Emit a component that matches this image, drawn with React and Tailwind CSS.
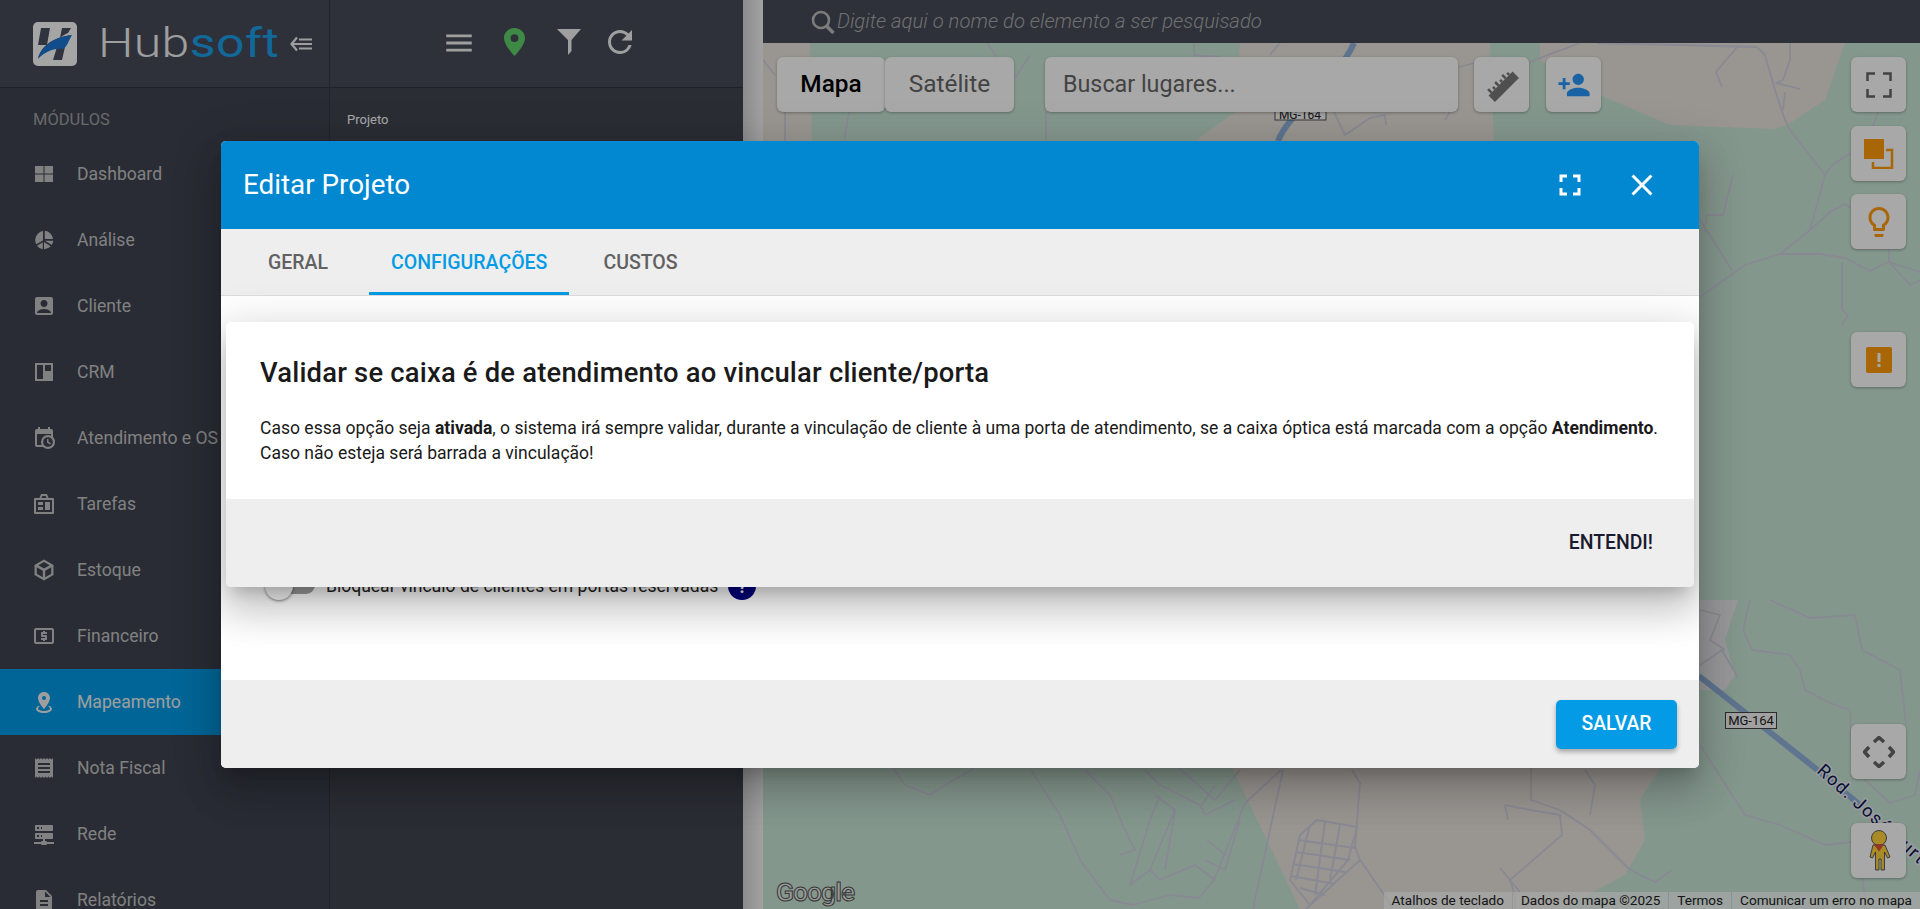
import React from "react";
import {
  MdAccountBox, MdOutlineLocalAtm, MdReceipt, MdDescription, MdClose, MdFullscreen, MdPersonAdd,
  MdLightbulbOutline, MdMenu, MdRefresh,
} from "react-icons/md";

const P = ({ d, className }) => (
  <svg viewBox="0 0 24 24" className={className} fill="currentColor"><path d={d} /></svg>
);
const Grid = ({ className }) => <P className={className} d="M3 4h8.500v7.500H3zM12.500 4H21v7.500h-8.500zM3 12.500h8.500V20H3zM12.500 12.500H21V20h-8.500z" />;
const Pie = ({ className }) => <P className={className} d="M11 3v9.500l-6.800 3.800A9.300 9.300 0 0 1 11 3zM12.800 2.800A9 9 0 0 1 21 11h-8.200zM13 12.800h8.300c-.2 1.500-.7 2.900-1.500 4.100zM12 14l6.700 4.300A9.300 9.300 0 0 1 12 21.300zM10.800 14.300v7A9.300 9.300 0 0 1 5 17.700z" />;
const Board = ({ className }) => <P className={className} d="M3 3h18v18H3zM5 5v14h6V5zM13 5v6h6V5z" />;
const CalClock = ({ className }) => <P className={className} d="M15,13H16.5V15.82L18.94,17.23L18.19,18.53L15,16.69V13M19,8H5V19H9.67C9.24,18.09 9,17.07 9,16A7,7 0 0,1 16,9C17.07,9 18.09,9.24 19,9.67V8M5,21C3.89,21 3,20.1 3,19V5C3,3.89 3.89,3 5,3H6V1H8V3H16V1H18V3H19A2,2 0 0,1 21,5V11.1C22.24,12.36 23,14.09 23,16A7,7 0 0,1 16,23C14.09,23 12.36,22.24 11.1,21H5M16,11.15A4.85,4.85 0 0,0 11.15,16C11.15,18.68 13.32,20.85 16,20.85A4.85,4.85 0 0,0 20.85,16C20.85,13.32 18.68,11.15 16,11.15Z" />;
const Task = ({ className }) => <P className={className} d="M9 2h6l1.500 4H21a1 1 0 0 1 1 1v14a1 1 0 0 1-1 1H3a1 1 0 0 1-1-1V7a1 1 0 0 1 1-1h4.500zM10.200 4l-.7 2h5l-.7-2zM4 8v12h16V8zM6 10h5v3H6zM13 10h5v8h-5zM6 15h5v3H6z" />;
const Cube = ({ className }) => <P className={className} d="M12 1.500 21.500 7v10L12 22.500 2.500 17V7zM12 4 6.300 7.300 12 10.600l5.700-3.300zM4.800 9.300v6.400l6 3.500v-6.400zM13.200 12.800v6.400l6-3.500V9.300z" />;
const MapMark = ({ className }) => <P className={className} d="M12,2C15.31,2 18,4.66 18,7.95C18,12.41 12,19 12,19C12,19 6,12.41 6,7.95C6,4.66 8.69,2 12,2M12,6A2,2 0 0,0 10,8A2,2 0 0,0 12,10A2,2 0 0,0 14,8A2,2 0 0,0 12,6M20,19C20,21.21 16.42,23 12,23C7.58,23 4,21.21 4,19C4,17.71 5.22,16.56 7.11,15.83L7.75,16.74C6.67,17.19 6,17.81 6,18.5C6,19.88 8.69,21 12,21C15.31,21 18,19.88 18,18.5C18,17.81 17.33,17.19 16.25,16.74L16.89,15.83C18.78,16.56 20,17.71 20,19Z" />;
const Server = ({ className }) => <P className={className} d="M13,19H14A1,1 0 0,1 15,20H22V22H15A1,1 0 0,1 14,23H10A1,1 0 0,1 9,22H2V20H9A1,1 0 0,1 10,19H11V17H4A1,1 0 0,1 3,16V12A1,1 0 0,1 4,11H20A1,1 0 0,1 21,12V16A1,1 0 0,1 20,17H13V19M4,3H20A1,1 0 0,1 21,4V8A1,1 0 0,1 20,9H4A1,1 0 0,1 3,8V4A1,1 0 0,1 4,3M9,7H10V5H9V7M9,15H10V13H9V15M5,5V7H7V5H5M5,13V15H7V13H5Z" />;

const items = [
  ["Dashboard", Grid], ["Análise", Pie], ["Cliente", MdAccountBox], ["CRM", Board],
  ["Atendimento e OS", CalClock], ["Tarefas", Task], ["Estoque", Cube], ["Financeiro", MdOutlineLocalAtm],
  ["Mapeamento", MapMark], ["Nota Fiscal", MdReceipt], ["Rede", Server], ["Relatórios", MdDescription],
];

const roads = [
  "M1530 62L1580 43", "M1597 43L1680 45L1757 47L1765 55L1775 90L1785 120L1790 130L1825 175L1810 230L1780 254L1745 265L1700 297",
  "M1780 254L1820 254L1845 258L1870 271L1888 262L1920 272", "M1825 175L1832 165L1851 153", "M1810 230L1830 212L1845 204L1851 208",
  "M1738 46L1716 72L1722 87", "M1790 43L1790 60L1783 80L1776 83L1800 89", "M1785 92L1783 110", "M1878 112L1873 126", "M1889 249L1889 262",
  "M1842 262L1842 310L1848 315L1842 325", "M1890 263L1910 285L1920 280", "M1700 220L1732 270", "M1733 175L1723 215L1706 215L1705 232",
  "M1750 600L1743 630L1752 650L1790 655L1800 670L1805 690L1830 703L1850 710L1852 760L1865 780L1890 803L1915 795L1920 770",
  "M1770 600L1810 618L1855 615L1862 650L1900 670L1906 724", "M1700 745L1745 815L1780 825L1825 845L1851 842", "M1862 878L1865 895L1865 909",
  "M1531 768L1531 800L1560 810L1590 830L1628 868L1640 875L1655 882L1672 870", "M1505 805L1530 810L1560 815L1562 835L1510 880L1515 895L1515 909",
  "M1585 770L1595 785L1590 815", "M1700 665L1722 650L1738 678", "M1700 610L1720 615L1710 640L1725 650", "M1520 892L1500 868",
  "M893 768L905 785L930 795L945 785L975 768", "M1031 770L1060 815L1080 860L1097 883L1110 900L1133 905L1170 895L1199 898L1214 880L1245 803L1281 770",
  "M1283 770L1253 909", "M1352 770L1360 783L1355 847L1360 860L1383 893L1393 909", "M1360 860L1306 909", "M1505 805L1508 820",
  "M1085 770L1110 795L1125 830L1135 850L1120 855", "M1145 770L1160 785L1200 805L1205 815L1235 800", "M1200 808L1215 785",
  "M1160 795L1150 820L1130 885L1150 870L1175 810L1155 795", "M1175 810L1165 870", "M1150 870L1160 880L1195 865L1215 880", "M1240 770L1215 800L1170 760",
  "M1207 840L1225 855", "M1205 860L1225 870L1240 820", "M987 43L997 57", "M1194 43L1194 55L1220 57", "M1270 55L1280 43", "M1459 67L1475 63",
  "M1530 62L1560 50", "M1046 112L1046 141", "M849 112L844 141", "M785 112L785 141", "M1030 55L1015 78", "M1334 112L1345 135L1370 118L1385 115L1386 125",
  "M1450 112L1445 120", "M763 60L775 75",
];
const grid = ["M1317 820L1357 827L1348 860L1310 905L1290 880L1300 835Z", "M1298 840L1355 848", "M1296 852L1350 860", "M1293 864L1345 872", "M1291 876L1335 884", "M1300 888L1325 895", "M1310 825L1296 880", "M1325 822L1315 895", "M1340 825L1330 880"];

const MapSvg = () => (
  <svg viewBox="763 43 1157 866" className="absolute inset-0 w-full h-full" preserveAspectRatio="none">
    <rect x="763" y="43" width="1157" height="866" fill="#c8e6d6" />
    <g fill="#e8e3dc">
      <path d="M763 43H810L812 141H763Z" />
      <path d="M1240 43H1490L1494 141H1195L1235 112Z" />
      <path d="M1540 43H1845L1825 100L1787 125L1775 129L1670 125L1600 95L1540 60Z" />
      <path d="M1232 768H1660L1640 800L1645 840L1625 875L1580 899L1560 909H1300Z" />
      <path d="M1700 600H1738L1725 640L1735 675L1725 690L1700 690Z" fill="#e7e7ea" />
    </g>
    <g fill="none" stroke="#d0d0e0" strokeWidth="1.800" strokeLinejoin="round">
      {roads.map((d) => <path key={d} d={d} />)}
      {grid.map((d) => <path key={d} d={d} strokeWidth="2" />)}
    </g>
    <g fill="none" stroke="#8fb0da" strokeWidth="6">
      <path d="M1354 43C1335 85 1290 110 1278 141" />
      <path d="M1699 676L1820 772L1860 805" />
    </g>
    <g>
      <rect x="1275" y="108" width="51" height="12" fill="#f5f5f5" stroke="#555" />
      <text x="1300" y="119" textAnchor="middle" fontSize="12" fill="#222" fontFamily="Roboto, sans-serif">MG-164</text>
      <rect x="1725.5" y="712.5" width="51" height="16" fill="#f5f5f5" stroke="#444" />
      <text x="1751" y="725" textAnchor="middle" fontSize="13" fill="#222" fontFamily="Roboto, sans-serif">MG-164</text>
      <text x="1816" y="772" transform="rotate(42 1816 772)" fontSize="18" letterSpacing="1.5" fill="#10184a" stroke="#e8ecf5" strokeWidth="3" paintOrder="stroke" fontFamily="Roboto, sans-serif">Rod. José Aurto</text>
    </g>
  </svg>
);

const MapBtn = ({ children, className = "" }) => (
  <div className={`w-[55px] h-[55px] bg-white rounded-[6px] flex items-center justify-center shadow-[0_1px_3px_rgba(0,0,0,.3)] ${className}`}>{children}</div>
);

export default function App() {
  return (
    <div className="relative w-full h-[909px] overflow-hidden flex font-['Roboto',sans-serif]">
      <aside className="w-[330px] shrink-0 h-full bg-[#3f4350] flex flex-col border-r border-[#353843]">
        <div className="h-[88px] shrink-0 bg-[#474b59] border-b border-[#30323b] flex items-center pl-[33px]">
          <svg viewBox="0 0 44 44" className="w-[44px] h-[44px] shrink-0">
            <rect width="44" height="44" rx="5" fill="#fbfbfb" />
            <path d="M8 6h9l-3 17H5zM29 6h9l-3 5c-3 1-6 3-8 5zM24 25h8l-3 13h-9zM5 36c3-10 12-20 33-23-9 5-9 13-18 14-6 1-11 4-15 9z" fill="#4a4f60" />
            <path d="M5 37c3-11 14-22 34-24-3 5-5 12-9 14-7-1-18 2-25 10z" fill="#1976d2" />
          </svg>
          <div className="ml-[21px] w-[180px] text-[40px] leading-none font-light tracking-[.3px] origin-left scale-x-[1.25] whitespace-nowrap">
            <span className="text-[#f0f0f0]">Hub</span><span className="text-[#1a9ee8] font-normal">soft</span>
          </div>
          <svg viewBox="0 0 22 16" className="w-[22px] h-[16px] ml-[12px] shrink-0 text-[#f0f0f0]" fill="none" stroke="currentColor" strokeWidth="2.200">
            <path d="M7 1.500L1.500 8 7 14.500M3 8H22M9 3.500H22M9 12.500H22" />
          </svg>
        </div>
        <div className="h-[53px] shrink-0 flex items-center pl-[33px] pt-[11px] text-[16.500px] text-[#a0a0a0]">MÓDULOS</div>
        {items.map(([label, Icon]) => {
          const active = label === "Mapeamento";
          return (
            <div key={label} className={`h-[66px] shrink-0 flex items-center pl-[32px] ${active ? "bg-[#039be5] text-[#f0f0f0]" : "text-[#c4c4c4]"}`}>
              <Icon className="w-[24px] h-[24px] shrink-0 mr-[21px]" />
              <span className="text-[17.600px] pt-[1px] whitespace-nowrap">{label}</span>
            </div>
          );
        })}
      </aside>

      <section className="w-[413px] shrink-0 h-full bg-[#41454f] flex flex-col">
        <div className="h-[88px] shrink-0 bg-[#474b59] border-b border-[#30323b] flex items-center text-[#f2f2f2] pl-[112px]">
          <MdMenu className="w-[34px] h-[34px] shrink-0 mb-[2px]" />
          <svg viewBox="0 0 24 32" className="w-[23px] h-[28px] ml-[27px] mb-[4px] shrink-0 text-[#5fd16a]" fill="currentColor">
            <path fillRule="evenodd" d="M12 0c6.600 0 12 5 12 11.500C24 20 12 32 12 32S0 20 0 11.500C0 5 5.400 0 12 0zm0 7a4.500 4.500 0 1 0 0 9 4.500 4.500 0 0 0 0-9z" />
          </svg>
          <svg viewBox="0 0 24 26" className="w-[24px] h-[26px] ml-[31px] mb-[4px] shrink-0" fill="currentColor"><path d="M0 0H24L14.500 11V22L11 26V11Z" /></svg>
          <MdRefresh className="w-[36px] h-[36px] ml-[21px] mb-[3px] shrink-0" />
        </div>
        <div className="h-[53px] shrink-0 flex items-center pl-[17px] pt-[11px] text-[13px] text-white">Projeto</div>
      </section>

      <div className="w-[20px] shrink-0 h-full bg-gradient-to-r from-[#d6d6d6] to-[#f5f5f5]" />

      <main className="flex-1 h-full flex flex-col min-w-0">
        <div className="h-[43px] shrink-0 bg-[#474b59] flex items-center pl-[48px] text-[#bdbdbd]">
          <svg viewBox="0 0 24 24" className="w-[24px] h-[24px] shrink-0" fill="none" stroke="currentColor" strokeWidth="2.600"><circle cx="10" cy="10" r="8" /><path d="M15.500 16L22.500 23" strokeWidth="3.500" /></svg>
          <span className="ml-[2px] text-[20.300px] font-light italic whitespace-nowrap text-[#aaaaaa]">Digite aqui o nome do elemento a ser pesquisado</span>
        </div>
        <div className="relative flex-1">
          <MapSvg />
          <div className="absolute left-[14px] top-[14px] flex items-start">
            <div className="w-[108px] h-[55px] bg-white rounded-[6px] flex items-center justify-center text-[24.400px] font-medium text-black shadow-[0_1px_3px_rgba(0,0,0,.3)]">Mapa</div>
            <div className="w-[129px] h-[55px] bg-white rounded-[6px] flex items-center justify-center text-[24.400px] text-[#666666] shadow-[0_1px_3px_rgba(0,0,0,.3)]">Satélite</div>
            <div className="w-[413px] h-[55px] ml-[31px] bg-white rounded-[6px] flex items-center pl-[18px] text-[23.300px] text-[#666666] shadow-[0_1px_3px_rgba(0,0,0,.3)]">Buscar lugares...</div>
            <MapBtn className="ml-[16px]">
              <svg viewBox="0 0 36 36" className="w-[36px] h-[36px] text-[#797979]" fill="currentColor">
                <g transform="rotate(-45 18 18)"><rect x="1" y="16" width="34" height="9" /><path d="M4 11h2.500v5H4zM9 13h2.500v3H9zM14 11h2.500v5H14zM19 13h2.500v3H19zM24 11h2.500v5H24zM29 13h2.500v3H29z" /></g>
              </svg>
            </MapBtn>
            <MapBtn className="ml-[17px]"><MdPersonAdd className="w-[34px] h-[34px] text-[#2697fa]" /></MapBtn>
          </div>
          <div className="absolute right-[14px] top-[14px] flex flex-col">
            <MapBtn>
              <svg viewBox="0 0 26 26" className="w-[26px] h-[26px]" fill="none" stroke="#666666" strokeWidth="2.500"><path d="M1.500 9V1.500H9M17 1.500H24.500V9M24.500 17V24.500H17M9 24.500H1.500V17" /></svg>
            </MapBtn>
            <MapBtn className="mt-[14px]">
              <svg viewBox="0 0 30 30" className="w-[30px] h-[30px] text-[#ff9c0c]"><rect x="0" y="0" width="20" height="20" fill="currentColor" /><path d="M22 11h6v18H9v-6" fill="none" stroke="currentColor" strokeWidth="2.500" /></svg>
            </MapBtn>
            <MapBtn className="mt-[13px]"><MdLightbulbOutline className="w-[36px] h-[36px] text-[#ff9c0c]" /></MapBtn>
            <MapBtn className="mt-[83px]">
              <svg viewBox="0 0 26 26" className="w-[26px] h-[26px] text-[#ff9c0c]"><rect width="26" height="26" rx="2" fill="currentColor" /><rect x="11.500" y="6" width="3" height="9" fill="#ffffff" /><rect x="11.500" y="17" width="3" height="3" fill="#ffffff" /></svg>
            </MapBtn>
            <MapBtn className="mt-[337px]">
              <svg viewBox="0 0 32 32" className="w-[32px] h-[32px]" fill="none" stroke="#666666" strokeWidth="3.500"><path d="M11 6L16 1.500 21 6M11 26L16 30.500 21 26M6 11L1.500 16 6 21M26 11L30.500 16 26 21" /></svg>
            </MapBtn>
            <MapBtn className="mt-[44px]">
              <svg viewBox="0 0 24 42" className="w-[24px] h-[42px]">
                <circle cx="12" cy="8" r="7.500" fill="#ffd23c" stroke="#333a55" strokeWidth=".8" />
                <path d="M6 15h12l5 12-2.500 1-3-6v18h-3.500V29h-2v11H8.500V22l-3 6L3 27z" fill="#ffd23c" stroke="#333a55" strokeWidth=".8" />
                <path d="M7 14.500h10l-5 7z" fill="#e0533a" />
              </svg>
            </MapBtn>
          </div>
          <div className="absolute left-[13px] bottom-[4px] text-[26.500px] leading-none font-medium tracking-[-1px] text-[#e8e8e8] [-webkit-text-stroke:1px_#555555]">Google</div>
          <div className="absolute right-0 bottom-0 h-[17px] flex items-center text-[13.550px] text-[#222222] gap-[1px]">
            <span className="bg-white/70 h-full px-[8px] leading-[17px] whitespace-nowrap">Atalhos de teclado</span>
            <span className="bg-white/70 h-full px-[8px] leading-[17px] whitespace-nowrap">Dados do mapa ©2025</span>
            <span className="bg-white/70 h-full px-[8px] leading-[17px] whitespace-nowrap">Termos</span>
            <span className="bg-white/70 h-full px-[8px] leading-[17px] whitespace-nowrap">Comunicar um erro no mapa</span>
          </div>
        </div>
      </main>

      <div className="absolute inset-0 bg-black/[.34]" />

      <div className="absolute left-[221px] top-[141px] w-[1478px] h-[627px] rounded-[5px] flex flex-col overflow-hidden bg-white shadow-[0_11px_15px_-7px_rgba(0,0,0,.2),0_24px_38px_3px_rgba(0,0,0,.14),0_9px_46px_8px_rgba(0,0,0,.12)]">
        <header className="h-[88px] shrink-0 bg-[#0288d1] flex items-center pl-[22px] text-white">
          <h1 className="text-[27.800px] font-normal flex-1">Editar Projeto</h1>
          <MdFullscreen className="w-[36px] h-[36px] shrink-0" />
          <MdClose className="w-[36px] h-[36px] ml-[36px] mr-[39px] shrink-0" />
        </header>
        <nav className="h-[67px] shrink-0 bg-[#eeeeee] border-b border-[#dddddd] flex pl-[25px] text-[19.500px] font-medium text-[#616161]">
          <div className="h-full px-[22px] pt-[2px] flex items-center">GERAL</div>
          <div className="h-full ml-[19px] px-[22px] pt-[5px] flex items-center text-[#039be5] border-b-[3px] border-[#039be5]">CONFIGURAÇÕES</div>
          <div className="h-full ml-[12px] px-[22px] pt-[2px] flex items-center">CUSTOS</div>
        </nav>
        <div className="relative flex-1 min-h-0">
          <div className="pt-[276px] pl-[44px] flex items-center">
            <div className="relative w-[50px] h-[28px] shrink-0">
              <div className="absolute right-0 top-[4px] w-[36px] h-[18px] rounded-[9px] bg-[#9e9e9e]" />
              <div className="absolute left-0 top-0 w-[28px] h-[28px] rounded-full bg-[#fafafa] shadow-[0_1px_3px_rgba(0,0,0,.5)]" />
            </div>
            <span className="ml-[11px] text-[17.550px] text-[#222222] whitespace-nowrap">Bloquear vínculo de clientes em portas reservadas</span>
            <div className="ml-[10px] w-[28px] h-[28px] rounded-full bg-[#000080] text-white flex items-center justify-center text-[18px] font-bold">?</div>
          </div>
          <div className="absolute left-[5px] top-[26px] w-[1468px] h-[265px] rounded-[5px] overflow-hidden flex flex-col shadow-[0_11px_15px_-7px_rgba(0,0,0,.2),0_24px_38px_3px_rgba(0,0,0,.14),0_9px_46px_8px_rgba(0,0,0,.12)]">
            <div className="h-[177px] shrink-0 bg-white pt-[33px] pl-[34px] pr-[24px] text-[#1a1a1a]">
              <h2 className="text-[27.400px] leading-[36px] font-medium tracking-[.2px] whitespace-nowrap">Validar se caixa é de atendimento ao vincular cliente/porta</h2>
              <p className="mt-[25px] text-[17.550px] leading-[25px]">Caso essa opção seja <strong className="font-bold">ativada</strong>, o sistema irá sempre validar, durante a vinculação de cliente à uma porta de atendimento, se a caixa óptica está marcada com a opção <strong className="font-bold">Atendimento</strong>. Caso não esteja será barrada a vinculação!</p>
            </div>
            <div className="flex-1 bg-[#eeeeee] flex items-center justify-end pr-[41px] text-[19.400px] font-medium text-[#1a1a2e]">ENTENDI!</div>
          </div>
        </div>
        <footer className="h-[88px] shrink-0 bg-[#eeeeee] flex items-center justify-end pr-[22px]">
          <div className="w-[121px] h-[49px] rounded-[5px] bg-[#039be5] text-white flex items-center justify-center text-[19.300px] font-medium shadow-[0_3px_5px_rgba(0,0,0,.3)]">SALVAR</div>
        </footer>
      </div>
    </div>
  );
}
